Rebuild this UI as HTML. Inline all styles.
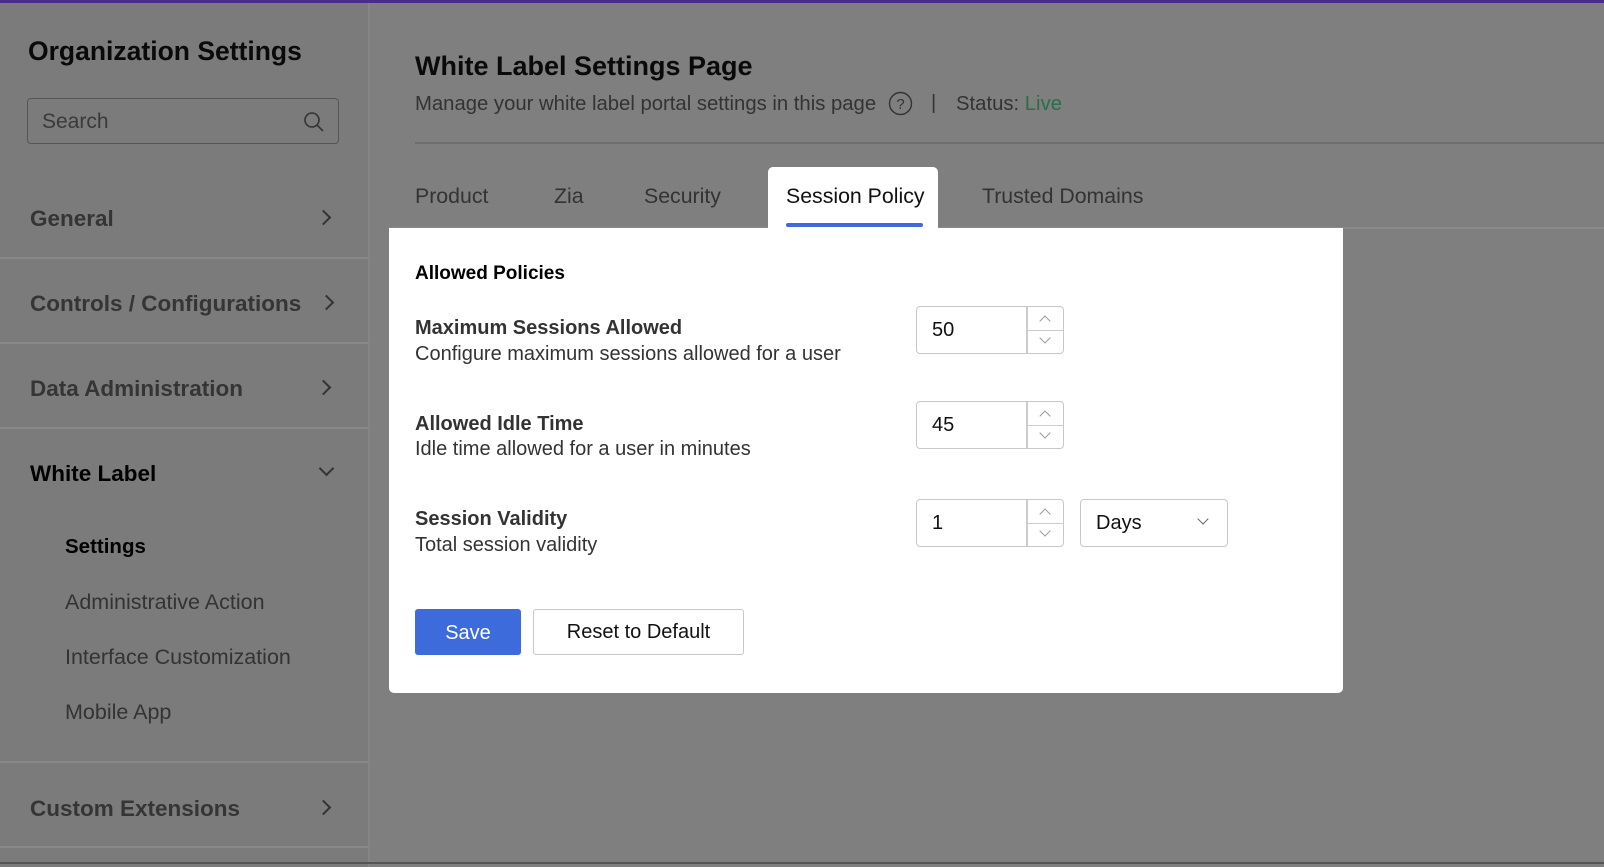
<!DOCTYPE html>
<html><head><style>
*{margin:0;padding:0;box-sizing:border-box}
body{width:1604px;height:864px;background:#7f7f7f;font-family:"Liberation Sans",sans-serif;position:relative;overflow:hidden;color:#000}
.a{position:absolute;white-space:nowrap}
.side{position:absolute;left:0;top:0;width:370px;height:864px;background:#7b7b7b;border-right:2px solid #858585}
.div{position:absolute;left:0;width:370px;height:2px;background:#888}
.nav{font-size:22.5px;font-weight:bold;color:#353535;left:30px}
.sub{font-size:21.5px;color:#333;left:65px}
.chev{position:absolute;width:11px;height:11px;border-right:2.4px solid #333;border-top:2.4px solid #333;transform:rotate(45deg)}
.tab{font-size:21.3px;color:#333;top:184px}
.lbl{font-size:20px;font-weight:bold;color:#333;left:415px}
.dsc{font-size:20px;color:#333;left:415px}
.inp{position:absolute;width:148px;height:48px;border:1.5px solid #c8c8c8;border-radius:4px;background:#fff}
.inp span{position:absolute;left:15px;top:12px;font-size:20px;color:#111}
.inp .sp{position:absolute;left:109px;top:0;width:1.5px;height:100%;background:#ccc}
.inp .mid{position:absolute;left:110px;top:23px;width:36px;height:1px;background:#ccc}
.ar{position:absolute;left:124px;width:8px;height:8px;border-left:1.5px solid #999;border-top:1.5px solid #999}
</style></head><body>
<div class="a" style="left:0;top:0;width:1604px;height:3px;background:#4a2b8c"></div>
<div class="side" style="top:3px">
</div>
<div class="a" style="left:28px;top:36px;font-size:26.5px;font-weight:bold;color:#0a0a0a">Organization Settings</div>
<div class="a" style="left:27px;top:98px;width:312px;height:46px;border:1.5px solid #555;border-radius:4px"></div>
<div class="a" style="left:42px;top:110px;font-size:21px;color:#3a3a3a">Search</div>
<svg class="a" style="left:303px;top:111px" width="22" height="22" viewBox="0 0 22 22"><circle cx="9" cy="9" r="7" fill="none" stroke="#333" stroke-width="1.6"/><line x1="14" y1="14" x2="20" y2="20" stroke="#333" stroke-width="1.6"/></svg>
<div class="div" style="top:257px"></div><div class="div" style="top:342px"></div><div class="div" style="top:427px"></div><div class="div" style="top:761px"></div><div class="div" style="top:846px"></div>
<div class="a nav" style="top:206px">General</div><div class="chev" style="left:318px;top:212px"></div>
<div class="a nav" style="top:291px">Controls / Configurations</div><div class="chev" style="left:321px;top:297px"></div>
<div class="a nav" style="top:376px">Data Administration</div><div class="chev" style="left:318px;top:382px"></div>
<div class="a nav" style="top:461px;color:#000">White Label</div><div class="chev" style="left:321px;top:463px;transform:rotate(135deg)"></div>
<div class="a sub" style="top:535px;font-weight:bold;color:#000;font-size:20.5px">Settings</div>
<div class="a sub" style="top:590px">Administrative Action</div>
<div class="a sub" style="top:645px">Interface Customization</div>
<div class="a sub" style="top:700px">Mobile App</div>
<div class="a nav" style="top:796px">Custom Extensions</div><div class="chev" style="left:318px;top:802px"></div>
<div class="a" style="left:415px;top:51px;font-size:27px;font-weight:bold;color:#0a0a0a">White Label Settings Page</div>
<div class="a" style="left:415px;top:93px;font-size:20.3px;color:#333">Manage your white label portal settings in this page</div>
<svg class="a" style="left:888px;top:91px" width="25" height="25" viewBox="0 0 25 25"><circle cx="12.5" cy="12.5" r="11" fill="none" stroke="#333" stroke-width="1.4"/><text x="12.5" y="18" font-size="15" text-anchor="middle" fill="#333" font-family="Liberation Sans">?</text></svg>
<div class="a" style="left:931px;top:92px;font-size:20px;color:#333">|</div>
<div class="a" style="left:956px;top:93px;font-size:20.3px;color:#333">Status: <span style="color:#2c6e4a">Live</span></div>
<div class="a" style="left:415px;top:142px;width:1189px;height:1.5px;background:#6e6e6e"></div>
<div class="a" style="left:389px;top:227px;width:1215px;height:1.5px;background:#8a8a8a"></div>
<div class="a tab" style="left:415px">Product</div>
<div class="a tab" style="left:554px">Zia</div>
<div class="a tab" style="left:644px">Security</div>
<div class="a" style="left:768px;top:167px;width:170px;height:62px;background:#fff;border-radius:5px 5px 0 0"></div>
<div class="a tab" style="left:786px;color:#111">Session Policy</div>
<div class="a" style="left:786px;top:223px;width:137px;height:4px;background:#3d6bdc;border-radius:2px"></div>
<div class="a tab" style="left:982px">Trusted Domains</div>
<div class="a" style="left:389px;top:228px;width:954px;height:465px;background:#fff;border-radius:0 0 5px 5px"></div>
<div class="a" style="left:415px;top:263px;font-size:19px;font-weight:bold;color:#000">Allowed Policies</div>
<div class="a lbl" style="top:317px">Maximum Sessions Allowed</div>
<div class="a dsc" style="top:343px">Configure maximum sessions allowed for a user</div>
<div class="a lbl" style="top:413px">Allowed Idle Time</div>
<div class="a dsc" style="top:438px">Idle time allowed for a user in minutes</div>
<div class="a lbl" style="top:508px">Session Validity</div>
<div class="a dsc" style="top:534px">Total session validity</div>
<div class="inp" style="left:916px;top:306px"><span>50</span><div class="sp"></div><div class="mid"></div><div class="ar" style="top:10px;transform:rotate(45deg)"></div><div class="ar" style="top:27px;transform:rotate(225deg)"></div></div>
<div class="inp" style="left:916px;top:401px"><span>45</span><div class="sp"></div><div class="mid"></div><div class="ar" style="top:10px;transform:rotate(45deg)"></div><div class="ar" style="top:27px;transform:rotate(225deg)"></div></div>
<div class="inp" style="left:916px;top:499px"><span>1</span><div class="sp"></div><div class="mid"></div><div class="ar" style="top:10px;transform:rotate(45deg)"></div><div class="ar" style="top:27px;transform:rotate(225deg)"></div></div>
<div class="inp" style="left:1080px;top:499px;width:148px"><span style="left:15px">Days</span><div class="ar" style="left:118px;top:15px;transform:rotate(225deg);border-color:#666"></div></div>
<div class="a" style="left:415px;top:609px;width:106px;height:46px;background:#3d6bdc;border-radius:3px;color:#fff;font-size:20px;text-align:center;line-height:48px">Save</div>
<div class="a" style="left:533px;top:609px;width:211px;height:46px;border:1.5px solid #c8c8c8;border-radius:3px;color:#111;font-size:20px;text-align:center;line-height:45px">Reset to Default</div>
<div class="a" style="left:0;top:862px;width:1604px;height:2px;background:#555"></div>
</body></html>
